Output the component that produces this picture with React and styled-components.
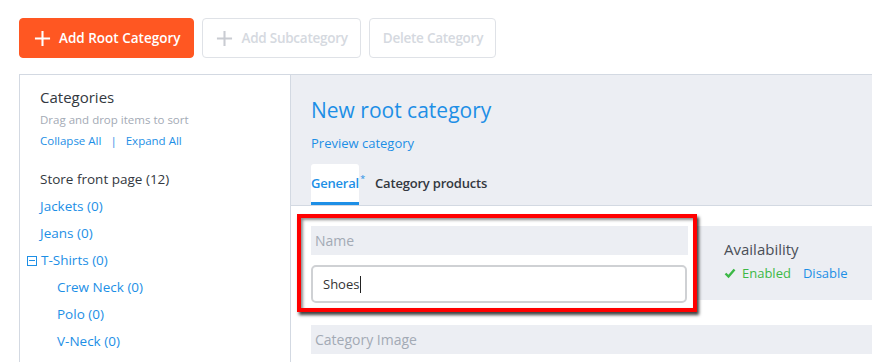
import React from 'react'
import styled, { createGlobalStyle } from 'styled-components'

const GlobalStyle = createGlobalStyle`
  html, body {
    margin: 0;
    padding: 0;
    height: 100%;
    background: #ffffff;
    font-family: "Open Sans", "Noto Sans", sans-serif;
    overflow: hidden;
  }
`

const colors = {
  blue: '#1d8fe6',
  orange: '#ff5722',
  panel: '#eceef3',
  line: '#d3d9e2',
  text: '#333840',
  muted: '#a3aab5',
  green: '#3cb846',
}

export default function App() {
  const tree = [
    { name: 'Jackets (0)', level: 0 },
    { name: 'Jeans (0)', level: 0 },
    { name: 'T-Shirts (0)', level: 0, open: true },
    { name: 'Crew Neck (0)', level: 1 },
    { name: 'Polo (0)', level: 1 },
    { name: 'V-Neck (0)', level: 1 },
  ]

  return (
    <Page>
      <GlobalStyle />
      <Toolbar>
        <Button primary>
          <Plus />
          Add Root Category
        </Button>
        <Button>
          <Plus />
          Add Subcategory
        </Button>
        <Button>Delete Category</Button>
      </Toolbar>

      <Main>
        <Sidebar>
          <SideTitle>Categories</SideTitle>
          <Hint>Drag and drop items to sort</Hint>
          <Links>
            <span>Collapse All</span>
            <Sep>|</Sep>
            <span>Expand All</span>
          </Links>
          <Root>Store front page (12)</Root>
          {tree.map((item) => (
            <TreeItem key={item.name} level={item.level} open={item.open}>
              {item.open && <Toggle />}
              {item.name}
            </TreeItem>
          ))}
        </Sidebar>

        <Content>
          <Header>
            <Title>New root category</Title>
            <Preview>Preview category</Preview>
            <Tabs>
              <Tab active>
                General<Star>*</Star>
              </Tab>
              <Tab>Category products</Tab>
            </Tabs>
          </Header>

          <Form>
            <Row>
              <NameCol>
                <Label>Name</Label>
                <Input>
                  Shoes<Caret />
                </Input>
                <Highlight />
              </NameCol>
              <Availability>
                <AvailTitle>Availability</AvailTitle>
                <AvailState>
                  <Enabled>
                    <Check viewBox="0 0 12 12">
                      <path d="M1.5 6.5 L4.5 9.5 L10.5 2.5" />
                    </Check>
                    Enabled
                  </Enabled>
                  <Disable>Disable</Disable>
                </AvailState>
              </Availability>
            </Row>
            <Label wide>Category Image</Label>
          </Form>
        </Content>
      </Main>
    </Page>
  )
}

const Plus = () => (
  <PlusIcon viewBox="0 0 18 18">
    <path d="M9 1 V17 M1 9 H17" />
  </PlusIcon>
)

//styles
const Page = styled.div`
  display: flex;
  flex-direction: column;
  height: 100vh;
  box-sizing: border-box;
  padding: 18px 0 0 19px;
`

const Toolbar = styled.div`
  display: flex;
  gap: 8px;
  height: 40px;
  flex-shrink: 0;
`

const Button = styled.div`
  display: flex;
  align-items: center;
  gap: 8px;
  box-sizing: border-box;
  height: 40px;
  padding: ${(p) => (p.primary ? '0 13px 0 14px' : '0 12px 0 13px')};
  border-radius: 4px;
  font-size: 13.5px;
  font-weight: 600;
  letter-spacing: ${(p) => (p.primary ? '0' : '-0.25px')};
  background: ${(p) => (p.primary ? colors.orange : '#fff')};
  color: ${(p) => (p.primary ? '#fff' : '#d5d9e0')};
  border: 1px solid ${(p) => (p.primary ? colors.orange : '#dfe2e7')};
  svg {
    stroke: ${(p) => (p.primary ? '#fff' : '#c9ccd2')};
  }
`

const PlusIcon = styled.svg`
  width: 17px;
  height: 17px;
  fill: none;
  stroke-width: 2.2;
`

const Main = styled.div`
  flex: 1;
  min-height: 0;
  display: flex;
  margin-top: 16px;
  border-top: 1px solid ${colors.line};
`

const Sidebar = styled.div`
  width: 250px;
  flex-shrink: 0;
  border-left: 1px solid ${colors.line};
  border-right: 1px solid ${colors.line};
  padding: 10px 0 0 20px;
  background: #fff;
`

const SideTitle = styled.div`
  font-size: 15px;
  color: ${colors.text};
  line-height: 24px;
`

const Hint = styled.div`
  font-size: 11.5px;
  color: ${colors.muted};
  line-height: 20px;
  margin-top: 1px;
`

const Links = styled.div`
  font-size: 11.5px;
  color: ${colors.blue};
  line-height: 20px;
  margin-top: 1px;
`

const Sep = styled.span`
  margin: 0 9px;
`

const Root = styled.div`
  font-size: 13.5px;
  color: ${colors.text};
  line-height: 27px;
  margin-top: 15px;
`

const TreeItem = styled.div`
  display: flex;
  align-items: center;
  font-size: 13.5px;
  color: ${colors.blue};
  line-height: 27px;
  margin-left: ${(p) => (p.open ? -13 : p.level * 17)}px;
`

const Toggle = styled.span`
  position: relative;
  width: 8px;
  height: 8px;
  border: 1px solid ${colors.blue};
  margin-right: 4px;
  &::after {
    content: '';
    position: absolute;
    left: 1px;
    right: 1px;
    top: 3.5px;
    height: 1px;
    background: ${colors.blue};
  }
`

const Content = styled.div`
  flex: 1;
  display: flex;
  flex-direction: column;
`

const Header = styled.div`
  background: ${colors.panel};
  padding: 20px 0 0 20px;
  border-bottom: 1px solid ${colors.line};
`

const Title = styled.div`
  font-size: 21px;
  color: ${colors.blue};
  line-height: 30px;
`

const Preview = styled.div`
  font-size: 13px;
  color: ${colors.blue};
  line-height: 20px;
  margin-top: 8px;
`

const Tabs = styled.div`
  display: flex;
  gap: 16px;
  margin-top: 11px;
`

const Tab = styled.div`
  position: relative;
  height: 41px;
  box-sizing: border-box;
  padding-top: 10px;
  font-size: 13px;
  font-weight: 600;
  letter-spacing: -0.2px;
  color: ${(p) => (p.active ? colors.blue : colors.text)};
  background: ${(p) => (p.active ? '#fff' : 'transparent')};
  border-bottom: 3px solid ${(p) => (p.active ? colors.blue : 'transparent')};
  border-radius: 3px 3px 0 0;
`

const Star = styled.span`
  position: absolute;
  right: -6px;
  top: 8px;
  font-size: 9px;
  font-weight: 400;
`

const Form = styled.div`
  flex: 1;
  background: #fff;
  padding: 20px 0 0 20px;
`

const Row = styled.div`
  display: flex;
  gap: 9px;
  align-items: flex-start;
`

const NameCol = styled.div`
  position: relative;
  width: 377px;
  flex-shrink: 0;
`

const Label = styled.div`
  background: ${colors.panel};
  height: 29px;
  line-height: 29px;
  padding-left: 4px;
  font-size: 14px;
  color: ${colors.muted};
  margin-top: ${(p) => (p.wide ? '22px' : '0')};
`

const Input = styled.div`
  display: flex;
  align-items: center;
  box-sizing: border-box;
  height: 38px;
  margin-top: 10px;
  width: 376px;
  border: 2px solid #cfd1d4;
  border-radius: 5px;
  padding-left: 10px;
  font-size: 13px;
  color: #333;
`

const Caret = styled.span`
  width: 1px;
  height: 17px;
  background: #222;
  margin-left: 1px;
`

const Highlight = styled.div`
  position: absolute;
  left: -14px;
  top: -12px;
  width: 400px;
  height: 98px;
  box-sizing: border-box;
  border: 4px solid #ff0000;
  box-shadow: 2px 3px 3px rgba(0, 0, 0, 0.75), inset 2px 2px 3px rgba(0, 0, 0, 0.45);
  pointer-events: none;
`

const Availability = styled.div`
  flex: 1;
  background: ${colors.panel};
  height: 74px;
  box-sizing: border-box;
  padding: 11px 0 0 27px;
`

const AvailTitle = styled.div`
  font-size: 15px;
  color: #4a4f57;
  line-height: 24px;
`

const AvailState = styled.div`
  display: flex;
  gap: 12px;
  font-size: 13px;
  line-height: 22px;
  margin-top: 1px;
`

const Enabled = styled.span`
  display: flex;
  align-items: center;
  gap: 6px;
  color: ${colors.green};
`

const Check = styled.svg`
  width: 12px;
  height: 12px;
  fill: none;
  stroke: ${colors.green};
  stroke-width: 2.4;
`

const Disable = styled.span`
  color: ${colors.blue};
`
